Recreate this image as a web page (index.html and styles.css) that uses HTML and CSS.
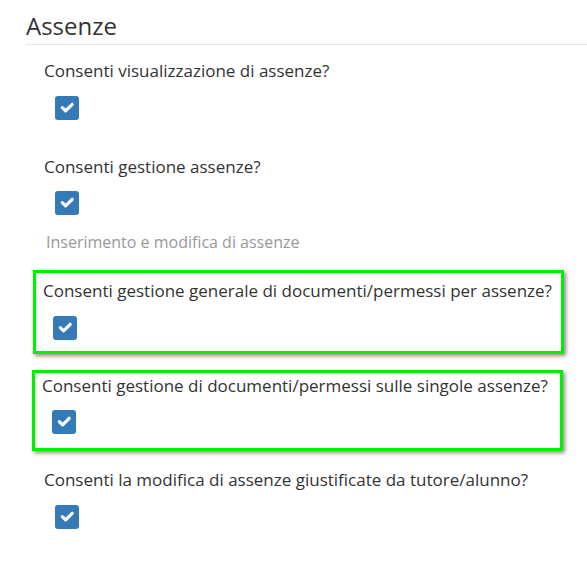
FILE: index.html
```html
<!DOCTYPE html>
<html lang="it">
<head>
<meta charset="utf-8">
<title>Assenze</title>
<link rel="stylesheet" href="styles.css">
</head>
<body>
<div class="panel">
  <h2 class="section-title">Assenze</h2>
  <div class="form-body">
    <div class="field field-first">
      <label class="field-label">Consenti visualizzazione di assenze?</label>
      <div class="check-row"><span class="checkbox"><svg viewBox="0 0 24 24" width="24" height="24"><path d="M7.3 11.6 L10.6 14.9 L17.2 8.3" fill="none" stroke="#fff" stroke-width="3.2" stroke-linecap="round" stroke-linejoin="round"/></svg></span></div>
    </div>
    <div class="field field-second">
      <label class="field-label">Consenti gestione assenze?</label>
      <div class="check-row"><span class="checkbox"><svg viewBox="0 0 24 24" width="24" height="24"><path d="M7.3 11.6 L10.6 14.9 L17.2 8.3" fill="none" stroke="#fff" stroke-width="3.2" stroke-linecap="round" stroke-linejoin="round"/></svg></span></div>
      <p class="help-text">Inserimento e modifica di assenze</p>
    </div>
    <div class="field highlight highlight-one">
      <label class="field-label">Consenti gestione generale di documenti/permessi per assenze?</label>
      <div class="check-row"><span class="checkbox"><svg viewBox="0 0 24 24" width="24" height="24"><path d="M7.3 11.6 L10.6 14.9 L17.2 8.3" fill="none" stroke="#fff" stroke-width="3.2" stroke-linecap="round" stroke-linejoin="round"/></svg></span></div>
    </div>
    <div class="field highlight highlight-two">
      <label class="field-label">Consenti gestione di documenti/permessi sulle singole assenze?</label>
      <div class="check-row"><span class="checkbox"><svg viewBox="0 0 24 24" width="24" height="24"><path d="M7.3 11.6 L10.6 14.9 L17.2 8.3" fill="none" stroke="#fff" stroke-width="3.2" stroke-linecap="round" stroke-linejoin="round"/></svg></span></div>
    </div>
    <div class="field field-last">
      <label class="field-label">Consenti la modifica di assenze giustificate da tutore/alunno?</label>
      <div class="check-row"><span class="checkbox"><svg viewBox="0 0 24 24" width="24" height="24"><path d="M7.3 11.6 L10.6 14.9 L17.2 8.3" fill="none" stroke="#fff" stroke-width="3.2" stroke-linecap="round" stroke-linejoin="round"/></svg></span></div>
    </div>
  </div>
</div>
</body>
</html>
```
FILE: styles.css
```css
html, body {
  margin: 0;
  padding: 0;
  background: #ffffff;
}

body {
  font-family: "Open Sans", "Liberation Sans", sans-serif;
  color: #333333;
  width: 587px;
  height: 584px;
  overflow: hidden;
}

.panel {
  padding-left: 26px;
}

.section-title {
  margin: 0;
  padding: 13px 0 5px 0;
  font-size: 24px;
  font-weight: 400;
  line-height: 26px;
  color: #333333;
  border-bottom: 1px solid #e5e5e5;
}

.form-body {
  padding-left: 18px;
}

.field-label {
  display: block;
  font-size: 17px;
  line-height: 22px;
  font-weight: 400;
  color: #333333;
  white-space: nowrap;
}

.check-row {
  display: flex;
  padding-left: 11px;
  margin-top: 14px;
}

.checkbox {
  display: block;
  width: 24px;
  height: 24px;
  border-radius: 3px;
  background: #337ab7;
}

.checkbox svg {
  display: block;
}

.field-first {
  margin-top: 15px;
}

.field-second {
  margin-top: 36px;
}

.field-second .check-row {
  margin-top: 13px;
}

.help-text {
  margin: 17px 0 0 2px;
  font-size: 16px;
  line-height: 21px;
  color: #999999;
}

.highlight {
  border: 3px solid #00f000;
  box-shadow: 2px 2px 4px rgba(0, 0, 0, 0.45), inset 1px 1px 3px rgba(0, 0, 0, 0.15);
}

.highlight .check-row {
  padding-left: 10px;
}

.highlight-one {
  margin: 17px 0 0 -11px;
  width: 518px;
  padding: 7px 0 11px 7px;
}

.highlight-one .check-row {
  margin-top: 14px;
}

.highlight-two {
  margin: 16px 0 0 -12px;
  width: 518px;
  padding: 2px 0 14px 7px;
}

.highlight-two .check-row {
  margin-top: 13px;
}

.field-last {
  margin-top: 18px;
}
```
